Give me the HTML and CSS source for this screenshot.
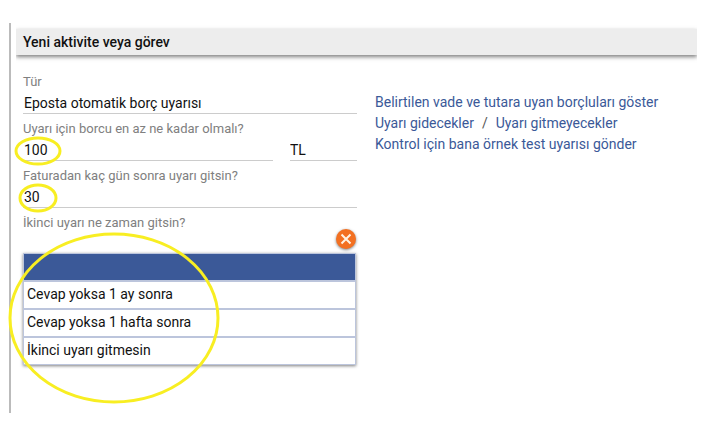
FILE: index.html
```html
<!DOCTYPE html>
<html lang="tr">
<head>
	<meta charset="UTF-8">
	<meta name="viewport" content="width=device-width, initial-scale=1.0">
	<title>Yeni aktivite veya görev</title>
	<link rel="stylesheet" href="styles.css">
</head>
<body>
	<main class="panel">
		<h1 class="panel-title">Yeni aktivite veya görev</h1>
		<div class="panel-body">
			<form class="form">
				<div class="field">
					<label for="type">Tür</label>
					<input type="text" id="type" value="Eposta otomatik borç uyarısı">
				</div>
				<div class="field">
					<label for="amount">Uyarı için borcu en az ne kadar olmalı?</label>
					<div class="amount-row">
						<input type="text" id="amount" value="100">
						<input type="text" class="currency" aria-label="Para birimi" value="TL">
					</div>
					<svg class="mark mark-amount" viewBox="0 0 48 30" aria-hidden="true"><ellipse cx="24" cy="15" rx="22" ry="13"/></svg>
				</div>
				<div class="field">
					<label for="days">Faturadan kaç gün sonra uyarı gitsin?</label>
					<input type="text" id="days" value="30">
					<svg class="mark mark-days" viewBox="0 0 40 30" aria-hidden="true"><ellipse cx="20" cy="15" rx="18" ry="13"/></svg>
				</div>
				<div class="field">
					<span class="field-label" id="secondLabel">İkinci uyarı ne zaman gitsin?</span>
					<button type="button" class="close" aria-label="Kapat">
						<svg viewBox="0 0 20 20" aria-hidden="true"><path d="M5.5 5.5l9 9M14.5 5.5l-9 9"/></svg>
					</button>
					<div class="options" role="listbox" aria-labelledby="secondLabel">
						<button type="button" class="option selected" role="option" aria-selected="true" aria-label="Boş"></button>
						<button type="button" class="option" role="option">Cevap yoksa 1 ay sonra</button>
						<button type="button" class="option" role="option">Cevap yoksa 1 hafta sonra</button>
						<button type="button" class="option" role="option">İkinci uyarı gitmesin</button>
					</div>
					<svg class="mark mark-options" viewBox="0 0 212 172" aria-hidden="true"><ellipse cx="106" cy="86" rx="104" ry="84"/></svg>
				</div>
			</form>
			<nav class="links">
				<div><a href="#">Belirtilen vade ve tutara uyan borçluları göster</a></div>
				<div><a href="#">Uyarı gidecekler</a><span class="slash">/</span><a href="#">Uyarı gitmeyecekler</a></div>
				<div><a href="#">Kontrol için bana örnek test uyarısı gönder</a></div>
			</nav>
		</div>
	</main>
</body>
</html>
```

FILE: styles.css
```css
* {
	box-sizing: border-box;
}
body {
	margin: 0;
	padding: 23px 22px 16px 9px;
	background-color: white;
	font-family: Roboto, "Liberation Sans", sans-serif;
	font-size: 14px;
	color: #111;
}
.panel {
	padding: 6px 0 48px 5px;
	border-left: 2px solid #bbb;
}
.panel-title {
	margin: 0;
	padding: 0 7px;
	background-color: #ededed;
	box-shadow: 0 2px 4px rgba(0, 0, 0, 0.5);
	clip-path: inset(-6px 0 -10px 0);
	font-size: 14px;
	font-weight: 500;
	line-height: 26px;
}
.panel-body {
	display: flex;
	gap: 18px;
	padding: 18px 7px 0;
}
.form {
	display: flex;
	flex-direction: column;
	gap: 6px;
	flex: 0 1 334px;
}
.field {
	position: relative;
	display: flex;
	flex-direction: column;
}
.field label, .field-label {
	font-size: 13px;
	line-height: 18px;
	color: #808080;
}
.field input {
	width: 100%;
	min-width: 0;
	height: 23px;
	padding: 2px 1px 0;
	border: 0;
	border-bottom: 1px solid #ccc;
	outline: none;
	background: none;
	font: inherit;
	color: inherit;
}
.amount-row {
	display: flex;
	gap: 17px;
}
.amount-row .currency {
	flex: 0 0 67px;
	padding-left: 0;
}
.close {
	align-self: flex-end;
	width: 20px;
	height: 20px;
	margin: -3px 1px 4px;
	padding: 0;
	border: 0;
	border-radius: 50%;
	background-color: #f37021;
	box-shadow: 0 1px 3px rgba(0, 0, 0, 0.5);
	cursor: pointer;
}
.close svg {
	display: block;
	fill: none;
	stroke: #fff3e4;
	stroke-width: 2;
}
.options {
	display: flex;
	flex-direction: column;
	gap: 2px;
	margin-right: 1px;
	border: 1px solid #bcc5dc;
	background-color: #bcc5dc;
	box-shadow: 0 1px 3px rgba(0, 0, 0, 0.5);
}
.option {
	height: 26px;
	padding: 0 3px 2px;
	border: 0;
	background-color: white;
	font: inherit;
	color: inherit;
	text-align: left;
	cursor: pointer;
}
.option.selected {
	background-color: #3b5998;
}
.links {
	padding-top: 19px;
	line-height: 21px;
	color: #3b5998;
}
.links a {
	color: inherit;
	text-decoration: none;
}
.links a:hover {
	text-decoration: underline;
}
.slash {
	margin: 0 8px;
	color: #555;
}
/* hand-drawn rings over the form */
.mark {
	position: absolute;
	fill: none;
	stroke: #f8ee22;
	stroke-width: 3;
	pointer-events: none;
}
.mark-amount {
	left: -9px;
	top: 16px;
	width: 48px;
}
.mark-days {
	left: -5px;
	top: 16px;
	width: 40px;
}
.mark-options {
	left: -15px;
	top: 18px;
	width: 212px;
}
```
